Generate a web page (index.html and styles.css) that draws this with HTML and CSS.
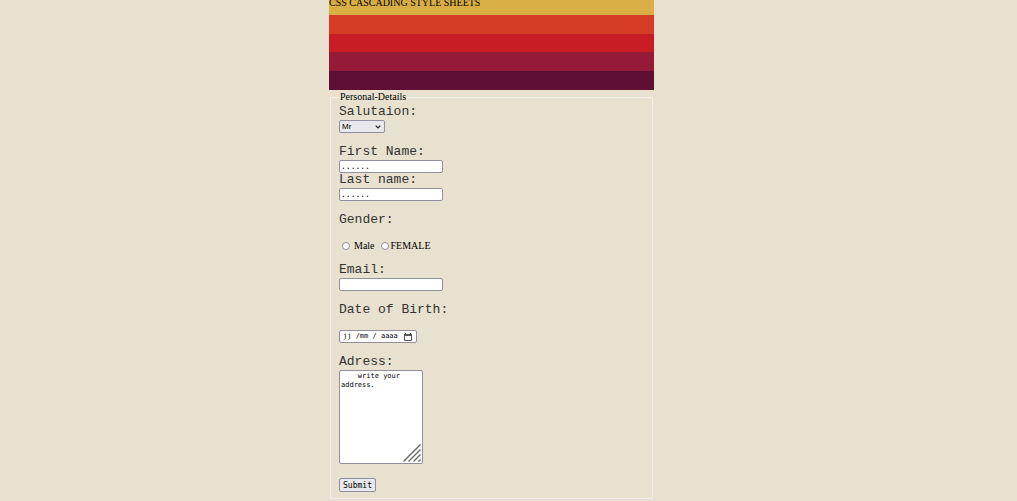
FILE: index.html
```html
<!DOCTYPE html>
<html lang="en">
<head>
<meta charset="utf-8">
<title>CSS Cascading Style Sheets</title>
<link rel="stylesheet" href="styles.css">
</head>
<body>
<main class="page">
  <header class="banner">
    <div class="stripe gold">CSS CASCADING STYLE SHEETS</div>
    <div class="stripe orange"></div>
    <div class="stripe red"></div>
    <div class="stripe wine"></div>
    <div class="stripe plum"></div>
  </header>
  <form>
    <fieldset class="details">
      <legend>Personal-Details</legend>
      <div class="field">
        <label class="label" for="salutation">Salutaion:</label>
        <div class="select-wrap">
          <select class="control select" id="salutation"><option>Mr</option><option>Mrs</option></select>
          <svg class="chevron" viewBox="0 0 6 4" aria-hidden="true"><path d="M.7.7 3 3 5.300.7" fill="none" stroke="#222" stroke-width="1.2"/></svg>
        </div>
      </div>
      <div class="field">
        <label class="label" for="first">First Name:</label>
        <input class="control text" id="first" type="text" value="......">
        <label class="label" for="last">Last name:</label>
        <input class="control text" id="last" type="text" value="......">
      </div>
      <div class="field spaced" role="radiogroup" aria-labelledby="gender">
        <span class="label" id="gender">Gender:</span>
        <div class="radios">
          <input class="radio" type="radio" name="gender" id="male"><label class="male" for="male">Male</label>
          <input class="radio" type="radio" name="gender" id="female"><label class="female" for="female">FEMALE</label>
        </div>
      </div>
      <div class="field">
        <label class="label" for="email">Email:</label>
        <input class="control text" id="email" type="email">
      </div>
      <div class="field spaced">
        <label class="label" for="birth">Date of Birth:</label>
        <div class="control date">
          <input class="date-input" id="birth" type="text" value="jj /mm / aaaa">
          <svg class="calendar" viewBox="0 0 8 8" aria-hidden="true"><path d="M.5 1.5h7v6h-7z" fill="none" stroke="#555"/><path d="M0 1h8v2H0zM1 0h1v1H1zM6 0h1v1H6z" fill="#555"/></svg>
        </div>
      </div>
      <div class="field">
        <label class="label" for="address">Adress:</label>
        <div class="area-wrap">
          <textarea class="control area" id="address">    write your address.</textarea>
          <svg class="grip" viewBox="0 0 18 18" aria-hidden="true"><path d="M.5 17.500l17-17M5.500 17.500l12-12M10.500 17.500l7-7M15.500 17.500l2-2" fill="none" stroke="#666" stroke-width="1.400"/></svg>
        </div>
      </div>
      <button class="control submit" type="submit">Submit</button>
    </fieldset>
  </form>
</main>
</body>
</html>
```
FILE: styles.css
```css
* { box-sizing: border-box; }
body {
  margin: 0;
  background: #e8e1cf;
  color: #000;
  font: 10px/12px "Liberation Serif", "Times New Roman", serif;
}
.page {
  width: 32%;
  margin-left: 329px;
  display: flow-root;
}
.banner {
  display: flex;
  flex-direction: column;
  height: 94px;
  margin-top: -4px;
}
.stripe { flex: 1; }
.gold { background: #d9ae45; line-height: 14px; }
.orange { background: #d73c26; }
.red { background: #c81d25; }
.wine { background: #951a38; }
.plum { background: #5e0f32; }
.details {
  margin: 1px 1px 0;
  padding: 2px 8px 6px;
  border: 1px solid #f0f0f0;
}
.details legend { padding: 0 1px; }
.field {
  display: flex;
  flex-direction: column;
  align-items: flex-start;
  margin-bottom: 12px;
}
.spaced { gap: 12px; }
.label {
  padding-bottom: 2px;
  color: #333;
  font: 13px/13px "Liberation Mono", "Courier New", monospace;
}
.control {
  margin: 0;
  border: 1px solid #8f8f9d;
  border-radius: 2px;
  background: #fff;
  color: #000;
  font: 7px/9px "DejaVu Sans Mono", monospace;
}
.text {
  width: 104px;
  height: 13px;
  padding: 0 1px;
  font-size: 8px;
}
.select-wrap, .area-wrap { position: relative; }
.select-wrap { display: flex; }
.select {
  appearance: none;
  width: 46px;
  height: 13px;
  padding: 0 2px;
  background: #e9e9ed;
  font: 8px/11px "Liberation Sans", Arial, sans-serif;
}
.chevron {
  position: absolute;
  right: 4px;
  top: 5px;
  width: 6px;
  height: 4px;
  pointer-events: none;
}
.radios {
  display: flex;
  align-items: center;
  height: 11px;
  padding-left: 3px;
}
.radio {
  appearance: none;
  width: 8px;
  height: 8px;
  margin: 0;
  border: 1px solid #8f8f9d;
  border-radius: 50%;
  background: #fff;
}
.radio:checked { background: #333; }
.male { margin: 0 6px 0 4px; }
.female { margin-left: 2px; }
.date {
  display: flex;
  align-items: center;
  width: 78px;
  height: 13px;
  padding: 0 4px 0 3px;
}
.date-input {
  flex: 1;
  min-width: 0;
  padding: 0;
  border: 0;
  background: none;
  font: inherit;
}
.calendar { width: 8px; height: 8px; }
.area-wrap { display: flex; margin-bottom: 2px; }
.area {
  width: 84px;
  height: 94px;
  padding: 1px;
  resize: none;
}
.grip {
  position: absolute;
  right: 2px;
  bottom: 2px;
  width: 18px;
  height: 18px;
  pointer-events: none;
}
.submit {
  display: block;
  width: 37px;
  height: 14px;
  padding: 0 2px;
}
.submit { background: #e9e9ed; font-size: 8px; }
```
